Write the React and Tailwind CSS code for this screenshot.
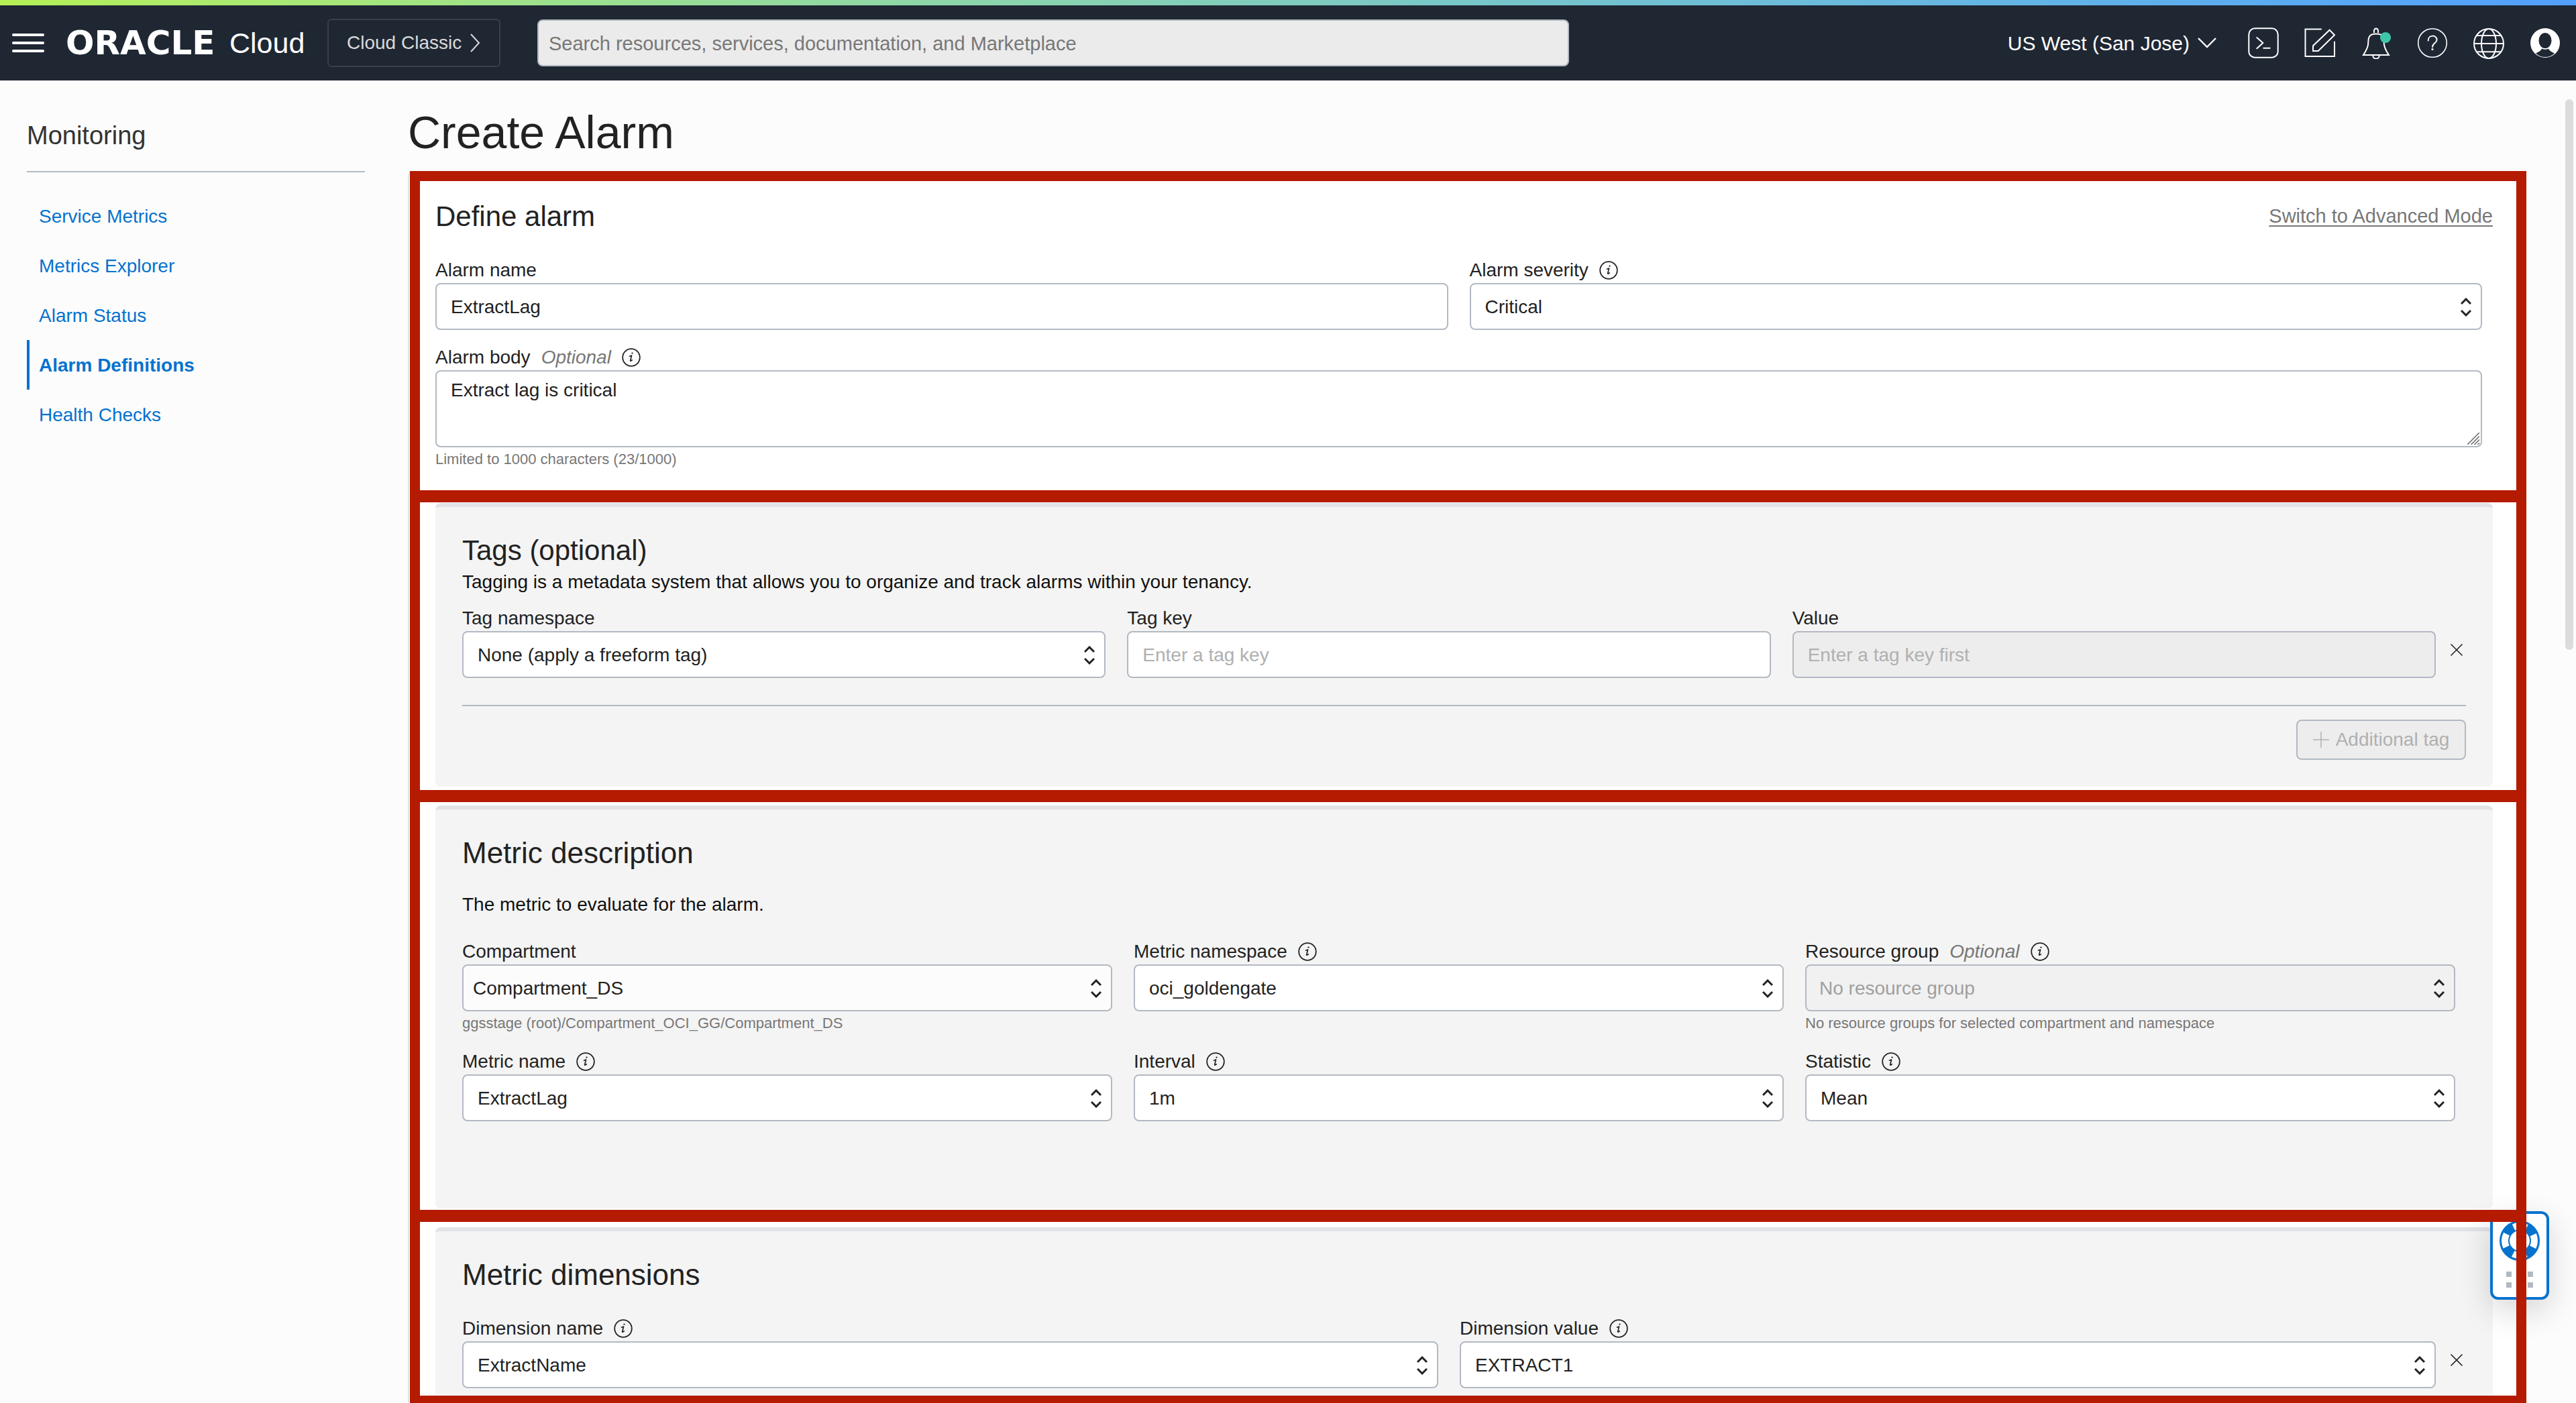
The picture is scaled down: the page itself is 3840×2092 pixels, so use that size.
import React from 'react';

const navLinks = [
  { label: 'Service Metrics' },
  { label: 'Metrics Explorer' },
  { label: 'Alarm Status' },
  { label: 'Alarm Definitions', active: true },
  { label: 'Health Checks' },
];

const controlBase =
  'block w-full h-[70px] rounded-lg border-2 border-[#b3b9c3] pt-[2px] text-[28px] text-[#222] disabled:text-[#9f9f9f] disabled:opacity-100 placeholder:text-[#b0b0b0]';

function InfoIcon() {
  return (
    <button type="button" aria-label="More information">
      <svg className="block size-7" viewBox="0 0 28 28" fill="none" stroke="#222" strokeLinecap="round">
        <circle cx="14" cy="14" r="12.8" strokeWidth="1.8" />
        <path d="M11.6 12.2c1-.6 2-1.1 3-1.2l-1.9 7.4c-.2 1.2.6 1 2.6-.6" strokeWidth="1.7" strokeLinejoin="round" />
        <circle cx="15.4" cy="7.6" r=".7" fill="#222" strokeWidth="1" />
      </svg>
    </button>
  );
}

function CloseIcon() {
  return (
    <svg className="block size-5" viewBox="0 0 20 20" fill="none" stroke="#222" strokeWidth="1.6">
      <path d="M1.500 1.500 18.500 18.500M18.500 1.500 1.500 18.500" />
    </svg>
  );
}

function FieldLabel({ id, label, optional, info }) {
  return (
    <div className="flex items-center gap-4 h-[38px] text-[28px] leading-[38px] text-[#222]">
      <label htmlFor={id}>{label}</label>
      {optional && <span className="italic text-[#777]">Optional</span>}
      {info && <InfoIcon />}
    </div>
  );
}

function SelectField({ id, label, value, help, optional, info, disabled, look = 'bg-white pl-[21px]' }) {
  return (
    <div>
      <FieldLabel id={id} label={label} optional={optional} info={info} />
      <div className="relative">
        <select id={id} disabled={disabled} className={`${controlBase} appearance-none ${look}`}>
          <option>{value}</option>
        </select>
        <svg
          className="absolute right-4 top-[22px] w-4 h-7 pointer-events-none"
          viewBox="0 0 16 28"
          fill="none"
          stroke="#222"
          strokeWidth="3"
        >
          <path d="M1 9 8 2l7 7M1 19l7 7 7-7" />
        </svg>
      </div>
      {help && <p className="mt-1 text-[22px] leading-7 text-[#777]">{help}</p>}
    </div>
  );
}

function TextField({ id, label, ...props }) {
  return (
    <div>
      <FieldLabel id={id} label={label} />
      <input id={id} type="text" className={`${controlBase} bg-white pl-[21px] disabled:bg-[#ededed]`} {...props} />
    </div>
  );
}

function RemoveButton({ label }) {
  return (
    <button type="button" aria-label={label} className="self-start mt-14 pl-[21px] pr-1">
      <CloseIcon />
    </button>
  );
}

// Red outline drawn on top of a section
function Highlight({ className }) {
  return (
    <div className={`absolute inset-0 z-20 pointer-events-none border-x-[15px] border-[#b41b00] ${className}`}></div>
  );
}

function Panel({ title, titleSize = 'text-[44px]', className, children }) {
  return (
    <div className={`rounded-lg border-t-[6px] border-[#e1e3e7] bg-[#f4f4f4] px-10 pt-[41px] ${className}`}>
      <h2 className={`leading-[48px] text-[#222] ${titleSize}`}>{title}</h2>
      {children}
    </div>
  );
}

function HeaderIcon({ label, children }) {
  return (
    <button type="button" aria-label={label}>
      <svg className="block size-12" viewBox="0 0 48 48" fill="none" stroke="#fff" strokeWidth="2">
        {children}
      </svg>
    </button>
  );
}

function Header() {
  return (
    <header>
      <div className="h-2 bg-linear-to-r from-[#b5ef54] to-[#529fff]"></div>
      <div className="flex items-center h-28 bg-[#1f2733] pl-[18px] pr-[22px] text-white">
        <button type="button" aria-label="Menu">
          <svg className="block w-12 h-7" viewBox="0 0 48 28" fill="none" stroke="#fff" strokeWidth="4" strokeLinecap="round">
            <path d="M2 2h44M2 14h44M2 26h44" />
          </svg>
        </button>
        <a href="#" className="flex items-center ml-8 w-[390px] whitespace-nowrap">
          <span className="w-[240px] font-['DejaVu_Sans'] font-bold text-[50px] leading-[56px]">ORACLE</span>
          <span className="ml-1 font-light text-[43px] leading-[56px]">Cloud</span>
        </a>
        <button
          type="button"
          className="flex items-center gap-3 w-[258px] h-[72px] rounded-md border-2 border-[#3a3f48] pl-[27px] text-[28px] text-[#dadada] whitespace-nowrap"
        >
          Cloud Classic
          <svg className="w-4 h-7" viewBox="0 0 16 28" fill="none" stroke="#dadada" strokeWidth="2">
            <path d="M2 1l12 13L2 27" />
          </svg>
        </button>
        <input
          type="search"
          aria-label="Search"
          placeholder="Search resources, services, documentation, and Marketplace"
          className="ml-[55px] w-[1538px] h-[70px] rounded-lg border-2 border-[#b1b8c1] bg-[#ebebeb] pl-[15px] pt-[2px] text-[29px] text-[#222] placeholder:text-[#777]"
        />
        <button type="button" className="flex items-center gap-3 ml-auto text-[30px] whitespace-nowrap">
          US West (San Jose)
          <svg className="w-7 h-4" viewBox="0 0 28 16" fill="none" stroke="#fff" strokeWidth="2.4">
            <path d="M1 1l13 13L27 1" />
          </svg>
        </button>
        <div className="flex gap-9 ml-[46px]">
          <HeaderIcon label="Developer tools">
            <rect x="2.3" y="2.3" width="43.4" height="43.4" rx="9" />
            <path d="M14.3 16l9 8-9 8.3M24.3 31.7h9.4" strokeLinecap="round" />
          </HeaderIcon>
          <HeaderIcon label="Feedback">
            <path d="M26.7 3.5H2.5V44H46V21.7M38.7 4.7l7.3 7.6L21.7 36H14v-7.7z" />
          </HeaderIcon>
          <HeaderIcon label="Announcements">
            <path d="M21 9V6a3 3.5 0 0 1 6 0v3M5 42c4-6 7.3-12 7.3-18 0-8 1-13.5 11.7-13.5S35.7 16 35.7 24c0 6 3.3 12 7.3 18zM19.3 43c0 6 9.4 6 9.4 0" />
            <circle cx="38" cy="16" r="8" fill="#3cc8a9" stroke="none" />
          </HeaderIcon>
          <HeaderIcon label="Help">
            <circle cx="24" cy="24" r="21.3" strokeWidth="1.6" />
            <path d="M17.7 20.5c-.3-9 13-9 12.8-1 0 5-6.5 4.5-6.5 10.5" strokeLinecap="round" />
            <circle cx="24" cy="33.5" r="1.6" fill="#fff" stroke="none" />
          </HeaderIcon>
          <HeaderIcon label="Language">
            <circle cx="24" cy="25" r="22" />
            <ellipse cx="24" cy="25" rx="11" ry="22" />
            <path d="M2 25h44M6 13h36M6 37.3h36" />
          </HeaderIcon>
          <HeaderIcon label="Profile">
            <circle cx="24" cy="24" r="22" fill="#fff" stroke="none" />
            <ellipse cx="24" cy="20.5" rx="9.5" ry="11.5" fill="#1f2733" stroke="none" />
            <path
              d="M19 32.5q5 2.5 10 0q1 3.5 9 7q-6 5.5-14 5.5t-14-5.5q8-3.500 9-7z"
              fill="#1f2733"
              stroke="none"
            />
          </HeaderIcon>
        </div>
      </div>
    </header>
  );
}

function Sidebar() {
  return (
    <aside className="w-[544px] shrink-0 pl-10 pt-[58px]">
      <h2 className="text-[38px] leading-[48px] text-[#333] font-light">Monitoring</h2>
      <nav className="mt-[29px] border-t-2 border-[#b3b9c3] pt-7">
        <ul>
          {navLinks.map((link) => (
            <li key={link.label}>
              <a
                href="#"
                className={`flex items-center h-[74px] border-l-4 pl-[14px] pt-[2px] text-[28px] text-[#0572ce] ${
                  link.active ? 'border-[#0572ce] font-bold' : 'border-transparent'
                }`}
              >
                {link.label}
              </a>
            </li>
          ))}
        </ul>
      </nav>
    </aside>
  );
}

function HelpWidget() {
  return (
    <button
      type="button"
      aria-label="Support"
      className="fixed right-10 bottom-[154px] z-10 flex flex-col items-center w-[88px] h-[132px] rounded-xl border-4 border-[#0572ce] bg-white pt-[10px] shadow-[0_16px_48px_rgba(0,0,0,0.16)]"
    >
      <svg className="size-[60px]" viewBox="0 0 60 60" fill="none">
        <circle cx="30" cy="30" r="22.5" stroke="#0572ce" strokeWidth="15" />
        <circle cx="30" cy="30" r="22" stroke="#fff" strokeWidth="10" strokeDasharray="20 14.56" strokeDashoffset="10" />
      </svg>
      <span className="grid grid-cols-3 gap-2 mt-4">
        {[0, 1, 2, 3, 4, 5].map((dot) => (
          <span key={dot} className="size-2 bg-[#b1b9c2]"></span>
        ))}
      </span>
    </button>
  );
}

export default function App() {
  return (
    <div className="min-h-screen bg-[#fcfcfc] font-['Liberation_Sans',Arial,sans-serif]">
      <Header />
      <div className="flex">
        <Sidebar />
        <main className="flex-1 pl-16 pr-[74px] pt-[37px]">
          <h1 className="mb-[18px] text-[68px] leading-[80px] text-[#222]">Create Alarm</h1>

          <form className="rounded-tl-lg border-l-2 border-[#e1e3e7] bg-white pl-px">
            <section className="relative pt-11 pb-8 pl-[38px] pr-[50px]">
              <Highlight className="border-t-[15px]" />
              <div className="flex items-center justify-between">
                <h2 className="text-[42px] leading-[48px] text-[#222]">Define alarm</h2>
                <a href="#" className="text-[29px] text-[#777] underline underline-offset-4">
                  Switch to Advanced Mode
                </a>
              </div>
              <div className="pr-4">
                <div className="grid grid-cols-2 gap-8 mt-[37px]">
                  <TextField id="alarm-name" label="Alarm name" defaultValue="ExtractLag" />
                  <SelectField id="severity" label="Alarm severity" value="Critical" info />
                </div>
                <div className="mt-[22px]">
                  <FieldLabel id="alarm-body" label="Alarm body" optional info />
                  <div className="relative">
                    <textarea
                      id="alarm-body"
                      defaultValue="Extract lag is critical"
                      className="block w-full h-[115px] resize-none rounded-lg border-2 border-[#b3b9c3] bg-white pl-[21px] pt-[10px] text-[28px] leading-9 text-[#222]"
                    />
                    <svg
                      className="absolute right-1 bottom-1 size-[18px] pointer-events-none"
                      viewBox="0 0 18 18"
                      stroke="#666"
                      strokeWidth="1.5"
                    >
                      <path d="M0 18 18 0M5.500 18 18 5.500M10.500 18l7.500-7.500M15.500 18l2.500-2.500" />
                    </svg>
                  </div>
                  <p className="mt-1 text-[22px] leading-7 text-[#777]">Limited to 1000 characters (23/1000)</p>
                </div>
              </div>
            </section>

            <section className="relative pt-[19px] pb-[5px] pl-[38px] pr-[50px]">
              <Highlight className="border-t-[18px]" />
              <Panel title="Tags (optional)" titleSize="text-[42px]" className="pb-10">
                <p className="mt-[7px] text-[28px] leading-8 text-[#111]">
                  Tagging is a metadata system that allows you to organize and track alarms within your tenancy.
                </p>
                <div className="flex mt-[19px]">
                  <div className="grid grid-cols-3 gap-8 flex-1">
                    <SelectField id="tag-namespace" label="Tag namespace" value="None (apply a freeform tag)" />
                    <TextField id="tag-key" label="Tag key" placeholder="Enter a tag key" />
                    <TextField id="tag-value" label="Value" placeholder="Enter a tag key first" disabled />
                  </div>
                  <RemoveButton label="Remove tag" />
                </div>
                <div className="flex justify-end mt-10 border-t-2 border-[#b3b9c3] pt-5">
                  <button
                    type="button"
                    disabled
                    className="flex items-center justify-center gap-[10px] w-[253px] h-[60px] rounded-lg border-2 border-[#b3b9c3] bg-[#ededed] text-[28px] text-[#b0b0b0] whitespace-nowrap"
                  >
                    <svg className="size-6" viewBox="0 0 24 24" stroke="#b0b0b0" strokeWidth="1.5">
                      <path d="M12 0v24M0 12h24" />
                    </svg>
                    Additional tag
                  </button>
                </div>
              </Panel>
            </section>

            <section className="relative pt-[23px] pb-[2px] pl-[38px] pr-[50px]">
              <Highlight className="border-t-[18px]" />
              <Panel title="Metric description" className="pb-[130px]">
                <p className="mt-[37px] text-[28px] leading-8 text-[#111]">The metric to evaluate for the alarm.</p>
                <div className="grid grid-cols-3 gap-x-8 gap-y-6 mt-[35px] pr-4">
                  <SelectField
                    id="compartment"
                    label="Compartment"
                    value="Compartment_DS"
                    help="ggsstage (root)/Compartment_OCI_GG/Compartment_DS"
                    look="bg-[#fcfcfc] pl-[14px]"
                  />
                  <SelectField id="metric-namespace" label="Metric namespace" value="oci_goldengate" info />
                  <SelectField
                    id="resource-group"
                    label="Resource group"
                    value="No resource group"
                    help="No resource groups for selected compartment and namespace"
                    look="bg-[#f1f1f1] pl-[19px]"
                    optional
                    info
                    disabled
                  />
                  <SelectField id="metric-name" label="Metric name" value="ExtractLag" info />
                  <SelectField id="interval" label="Interval" value="1m" info />
                  <SelectField id="statistic" label="Statistic" value="Mean" info />
                </div>
              </Panel>
            </section>

            <section className="relative pt-[26px] pl-[38px] pr-[50px]">
              <Highlight className="border-t-[18px] border-b-[11px]" />
              <Panel title="Metric dimensions" className="pb-[22px]">
                <div className="flex mt-[37px]">
                  <div className="grid grid-cols-2 gap-8 flex-1">
                    <SelectField id="dimension-name" label="Dimension name" value="ExtractName" info />
                    <SelectField id="dimension-value" label="Dimension value" value="EXTRACT1" info />
                  </div>
                  <RemoveButton label="Remove dimension" />
                </div>
              </Panel>
            </section>
          </form>
        </main>
      </div>
      <HelpWidget />
      <div className="fixed right-1 top-[148px] w-3 h-[821px] rounded-full bg-[#dcdcdc]"></div>
    </div>
  );
}
